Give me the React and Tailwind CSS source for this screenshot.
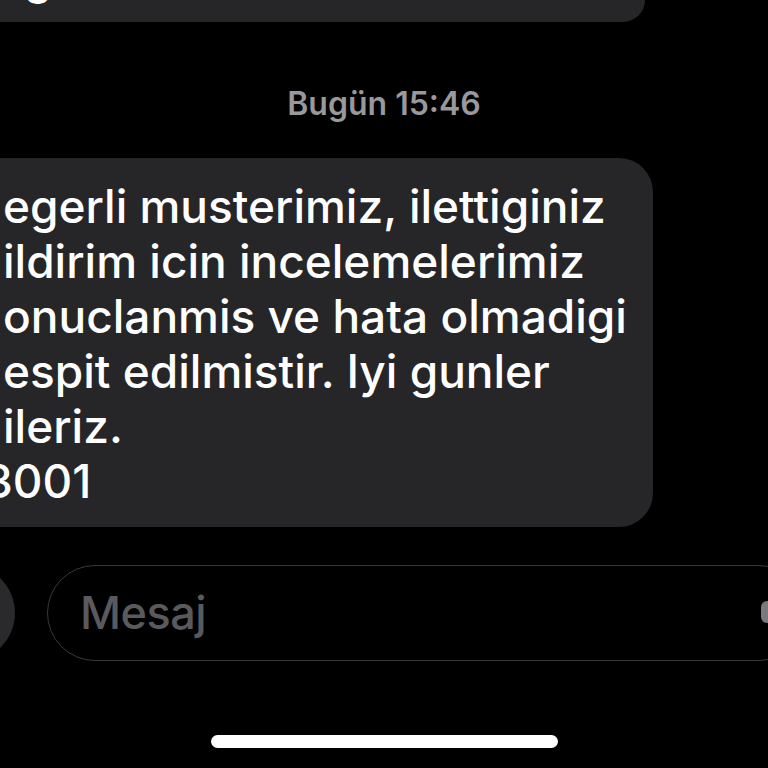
import React from 'react';

// 訊息內容 (左邊被裁掉的部分就不顯示)
const lines = [
  'egerli musterimiz, ilettiginiz',
  'ildirim icin incelemelerimiz',
  'onuclanmis ve hata olmadigi',
  'espit edilmistir. Iyi gunler',
  'ileriz.',
];

function App() {
  return (
    <div className="w-[768px] h-[768px] bg-black overflow-hidden flex flex-col font-['Inter','Noto_Sans',sans-serif]">
      {/* 上一則訊息的尾巴 */}
      <div className="h-[22px] w-[645px] shrink-0 bg-[#262628] rounded-br-[30px] overflow-hidden">
        <p className="text-white text-[45px] leading-[55px] font-medium -mt-[50px] pl-[24px]">g</p>
      </div>

      {/* 時間 */}
      <div className="mt-[64px] h-[36px] flex items-center justify-center text-[32px] font-semibold text-[#98989d]">
        Bugün 15:46
      </div>

      {/* 訊息泡泡 */}
      <div className="mt-[36px] w-[653px] shrink-0 bg-[#262628] rounded-r-[34px] pt-[21px] pb-[18px] pl-[3px] text-white text-[46px] leading-[55px] font-medium">
        {lines.map((l) => (
          <p key={l} className="whitespace-nowrap">{l}</p>
        ))}
        <p className="-ml-[19px]">3001</p>
      </div>

      {/* 輸入列 */}
      <div className="mt-[38px] flex items-center gap-[32px] shrink-0">
        <div className="w-[96px] h-[96px] -ml-[81px] shrink-0 rounded-full bg-[#2a2a2c]" />
        <div className="w-[760px] h-[96px] shrink-0 rounded-full border-[1.5px] border-[#3a3a3c] flex items-center justify-between pl-[32px] pr-[24px]">
          <span className="text-[45px] text-[#5a5a5e] font-medium tracking-[-0.5px]">Mesaj</span>
          <svg width="24" height="30" viewBox="0 0 24 30">
            <rect x="3" y="3" width="12" height="22" rx="6" fill="#7a7a7e" />
          </svg>
        </div>
      </div>

      {/* Home indicator */}
      <div className="mt-[74px] flex justify-center">
        <div className="w-[347px] h-[13px] rounded-full bg-white" />
      </div>
    </div>
  );
}

export default App;
